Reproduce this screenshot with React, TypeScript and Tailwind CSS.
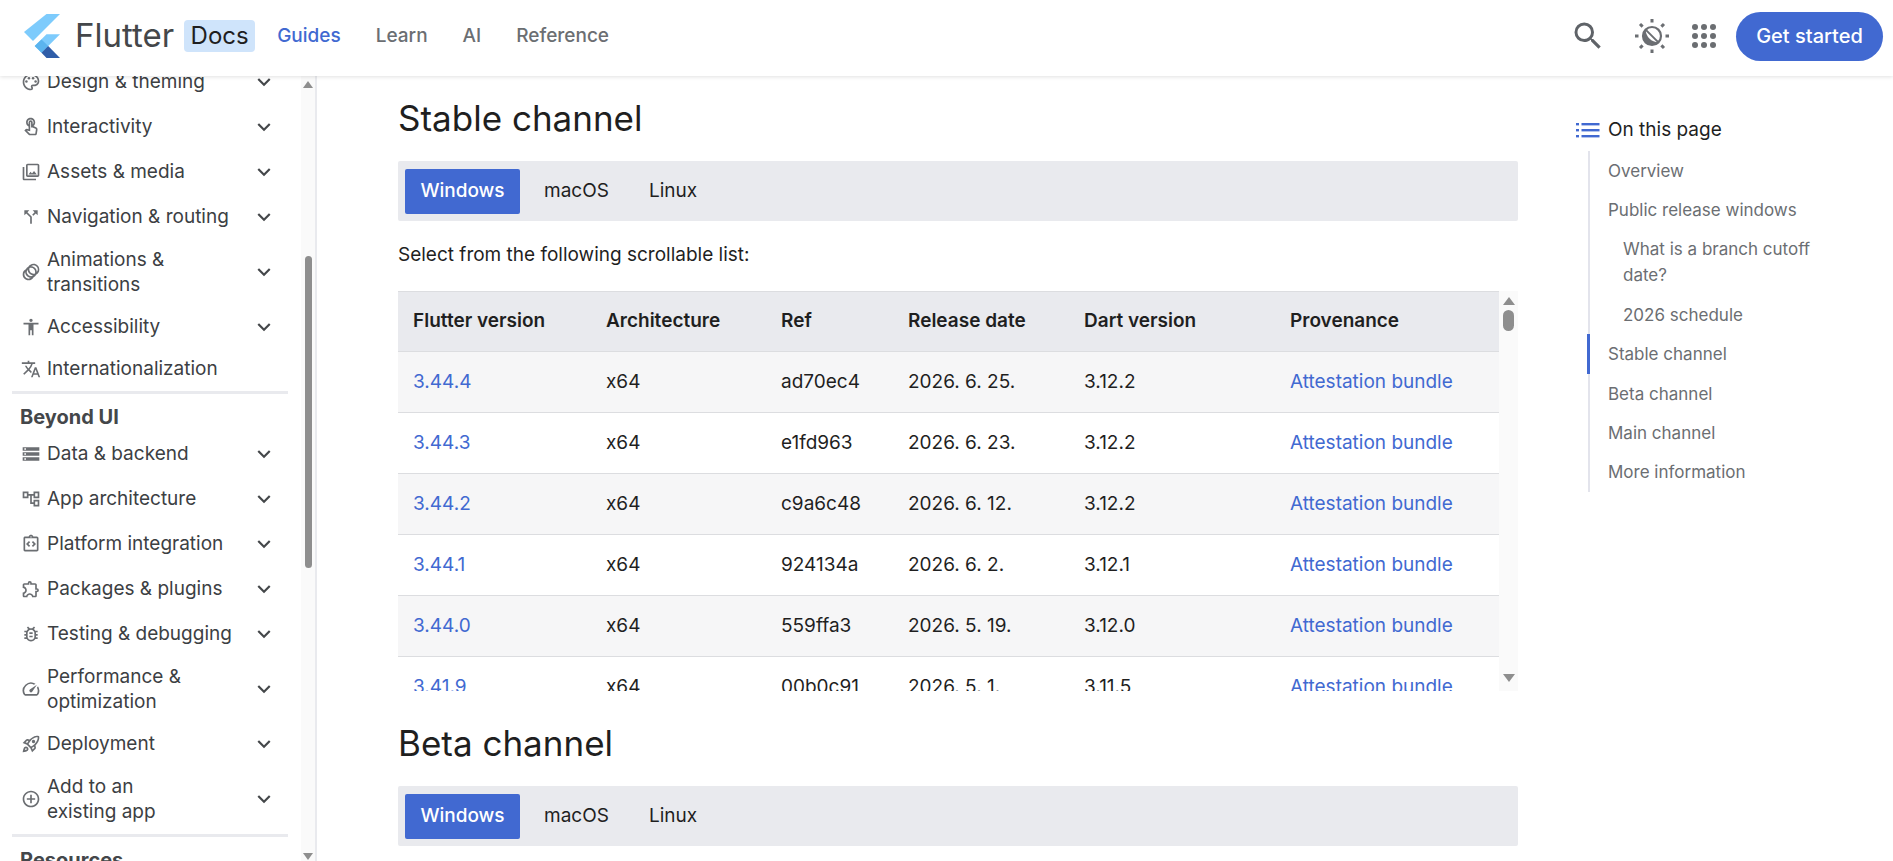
import React from 'react'
import {
  MdAccessibility,
  MdAddCircleOutline,
  MdExpandMore,
  MdOutlineAccountTree,
  MdOutlineAnimation,
  MdOutlineBugReport,
  MdOutlineCallSplit,
  MdOutlineExtension,
  MdOutlineIntegrationInstructions,
  MdOutlinePalette,
  MdOutlinePhotoLibrary,
  MdOutlineRocketLaunch,
  MdOutlineSpeed,
  MdOutlineStorage,
  MdOutlineTouchApp,
  MdOutlineTranslate,
  MdSearch,
} from 'react-icons/md'

type NavItem = {
  icon: React.ComponentType<{ className?: string }>
  label: React.ReactNode
  tall?: boolean
  noChevron?: boolean
}

const uiItems: NavItem[] = [
  { icon: MdOutlinePalette, label: 'Design & theming' },
  { icon: MdOutlineTouchApp, label: 'Interactivity' },
  { icon: MdOutlinePhotoLibrary, label: 'Assets & media' },
  { icon: MdOutlineCallSplit, label: 'Navigation & routing' },
  { icon: MdOutlineAnimation, label: <>Animations &<br />transitions</>, tall: true },
  { icon: MdAccessibility, label: 'Accessibility' },
  { icon: MdOutlineTranslate, label: 'Internationalization', noChevron: true },
]

const beyondItems: NavItem[] = [
  { icon: MdOutlineStorage, label: 'Data & backend' },
  { icon: MdOutlineAccountTree, label: 'App architecture' },
  { icon: MdOutlineIntegrationInstructions, label: 'Platform integration' },
  { icon: MdOutlineExtension, label: 'Packages & plugins' },
  { icon: MdOutlineBugReport, label: 'Testing & debugging' },
  { icon: MdOutlineSpeed, label: <>Performance &<br />optimization</>, tall: true },
  { icon: MdOutlineRocketLaunch, label: 'Deployment' },
  { icon: MdAddCircleOutline, label: <>Add to an<br />existing app</>, tall: true },
]

const releases = [
  ['3.44.4', 'x64', 'ad70ec4', '2026. 6. 25.', '3.12.2'],
  ['3.44.3', 'x64', 'e1fd963', '2026. 6. 23.', '3.12.2'],
  ['3.44.2', 'x64', 'c9a6c48', '2026. 6. 12.', '3.12.2'],
  ['3.44.1', 'x64', '924134a', '2026. 6. 2.', '3.12.1'],
  ['3.44.0', 'x64', '559ffa3', '2026. 5. 19.', '3.12.0'],
  ['3.41.9', 'x64', '00b0c91', '2026. 5. 1.', '3.11.5'],
]

const FlutterLogo = () => (
  <svg viewBox="0 0 36 44" className="h-[44px] w-[36px]">
    <path d="M22.5 0H36L9 27 0 18z" fill="#7dcbfc" />
    <path d="M36 20.3H22.5L10.7 32.1l6.8 6.7z" fill="#7dcbfc" />
    <path d="M10.7 32.1l6.8-6.7 6.7 6.7-6.7 6.7z" fill="#5bb4ee" />
    <path d="M17.5 38.8l6.7-6.7L36 44H22.5z" fill="#2f5da8" />
  </svg>
)

const ThemeIcon = () => (
  <svg viewBox="0 0 36 36" className="h-[36px] w-[36px]" fill="none" stroke="#6b6e72">
    <circle cx="18" cy="18" r="9" strokeWidth="2.2" />
    <path d="M11.6 11.6l12.8 12.8" strokeWidth="2" />
    <path d="M11.6 11.6A9 9 0 0 0 24.4 24.4 13 13 0 0 1 11.6 11.6z" fill="#6b6e72" stroke="none" />
    <path d="M18 1v3.5M18 31.5V35M1 18h3.5M31.5 18H35M6 6l2.6 2.6M27.4 27.4L30 30M30 6l-2.6 2.6M8.6 27.4L6 30" strokeWidth="3" />
  </svg>
)

const AppsIcon = () => (
  <svg viewBox="0 0 24 24" className="h-[24px] w-[24px]" fill="#6b6e72">
    {[3, 12, 21].map(cy => [3, 12, 21].map(cx => <circle key={`${cx}-${cy}`} cx={cx} cy={cy} r="3" />))}
  </svg>
)

const TocIcon = () => (
  <svg viewBox="0 0 24 16" className="h-[16px] w-[24px]" fill="#4169d1">
    <rect x="0" y="1" width="3" height="2.4" />
    <rect x="0" y="7" width="3" height="2.4" />
    <rect x="0" y="13" width="3" height="2.4" />
    <rect x="5.5" y="1" width="18" height="2.4" />
    <rect x="5.5" y="7" width="18" height="2.4" />
    <rect x="5.5" y="13" width="18" height="2.4" />
  </svg>
)

const SideRow = ({ item }: { item: NavItem }) => (
  <div className={`flex items-center pr-[23px] pl-[21px] ${item.tall ? 'h-[65px]' : item.noChevron ? 'h-[39px]' : 'h-[45px]'}`}>
    <item.icon className="mr-[6px] h-[20px] w-[20px] shrink-0 text-[#6b6e72]" />
    <span className="flex-1 text-[19px] leading-[25px] text-[#3c4043]">{item.label}</span>
    {!item.noChevron && <MdExpandMore className="h-[26px] w-[26px] text-[#44474a]" />}
  </div>
)

const Tabs = () => (
  <div className="flex h-[60px] items-center rounded-[2px] bg-[#e9eaee] pl-[7px]">
    <div className="flex h-[45px] w-[115px] items-center justify-center rounded-[2px] bg-[#4169d1] text-[19px] font-medium text-white">Windows</div>
    <div className="ml-[24px] text-[19px] text-[#1f1f1f]">macOS</div>
    <div className="ml-[40px] text-[19px] text-[#1f1f1f]">Linux</div>
  </div>
)

const tocItems: [string, string, boolean?][] = [
  ['Overview', 'h-[39px] pl-[18px]'],
  ['Public release windows', 'h-[39px] pl-[18px]'],
  ['What is a branch cutoff date?', 'h-[66px] pl-[33px]'],
  ['2026 schedule', 'h-[39px] pl-[33px]'],
  ['Stable channel', 'h-[40px] pl-[18px]', true],
  ['Beta channel', 'h-[39px] pl-[18px]'],
  ['Main channel', 'h-[39px] pl-[18px]'],
  ['More information', 'h-[40px] pl-[18px]'],
]

const tableCols = 'grid-cols-[193px_175px_127px_176px_206px_224px]'

export default function App() {
  return (
    <div className="flex h-[861px] w-[1893px] flex-col overflow-hidden bg-white font-['Inter',sans-serif] text-[#1f1f1f]">
      <header className="relative z-10 flex h-[76px] shrink-0 items-center pr-[10px] pb-[4px] pl-[24px] shadow-[0_1px_4px_rgba(0,0,0,0.12)]">
        <FlutterLogo />
        <span className="ml-[15px] text-[33px] text-[#44474a]">Flutter</span>
        <span className="ml-[10px] flex h-[32px] w-[71px] items-center justify-center rounded-[4px] bg-[#cfe4fb] text-[24px]">Docs</span>
        <nav className="ml-[22px] flex items-center gap-[35px] text-[19px] font-medium text-[#6b6e72]">
          <span className="text-[#4169d1]">Guides</span>
          <span>Learn</span>
          <span>AI</span>
          <span>Reference</span>
        </nav>
        <div className="ml-auto flex items-center">
          <MdSearch className="h-[36px] w-[36px] text-[#5f6368]" />
          <div className="ml-[28px]"><ThemeIcon /></div>
          <div className="ml[0px] ml-[22px]"><AppsIcon /></div>
          <div className="ml-[20px] flex h-[49px] w-[147px] items-center justify-center rounded-full bg-[#4169d1] text-[20px] font-medium text-white">Get started</div>
        </div>
      </header>

      <div className="flex min-h-0 flex-1">
        <aside className="relative w-[317px] shrink-0 overflow-hidden border-r-[2px] border-[#e9eaee]">
          <div className="-mt-[17px] w-[300px]">
            {uiItems.map((item, i) => <SideRow key={i} item={item} />)}
            <div className="mx-[12px] mt-[3px] h-[3px] bg-[#e9eaee]" />
            <div className="mt-[9px] h-[28px] pl-[20px] text-[20px] font-bold leading-[28px] text-[#44474a]">Beyond UI</div>
            {beyondItems.map((item, i) => <SideRow key={i} item={item} />)}
            <div className="mx-[12px] mt-[3px] h-[3px] bg-[#e9eaee]" />
            <div className="mt-[9px] pl-[20px] text-[20px] font-bold leading-[28px] text-[#44474a]">Resources</div>
          </div>
          <div className="absolute top-0 right-0 bottom-0 flex w-[14px] flex-col items-center bg-[#fafafa]">
            <div className="mt-[5px] h-0 w-0 border-x-[5px] border-b-[7px] border-x-transparent border-b-[#8e8e8e]" />
            <div className="mt-[168px] h-[312px] w-[7px] rounded-full bg-[#8e8e8e]" />
            <div className="mt-auto mb-[1px] h-0 w-0 border-x-[5px] border-t-[7px] border-x-transparent border-t-[#8e8e8e]" />
          </div>
        </aside>

        <main className="ml-[81px] w-[1120px] shrink-0 overflow-hidden">
          <h2 className="mt-[18px] h-[48px] text-[35px] leading-[48px] text-[#1f1f1f]">Stable channel</h2>
          <div className="mt-[19px]"><Tabs /></div>
          <p className="mt-[20px] h-[28px] text-[19px] leading-[28px]">Select from the following scrollable list:</p>
          <div className="mt-[22px] flex h-[400px] overflow-hidden">
            <div className="w-[1101px] overflow-hidden">
              <div className={`grid h-[61px] items-center border-y border-[#dcdde0] bg-[#e9eaee] pl-[15px] text-[19px] font-semibold ${tableCols}`}>
                <span>Flutter version</span>
                <span>Architecture</span>
                <span>Ref</span>
                <span>Release date</span>
                <span>Dart version</span>
                <span>Provenance</span>
              </div>
              {releases.map((row, i) => (
                <div key={row[0]} className={`grid h-[61px] items-center border-b border-[#dcdde0] pl-[15px] text-[19px] ${tableCols} ${i % 2 === 0 ? 'bg-[#f6f6f7]' : 'bg-white'}`}>
                  <span className="text-[#4169d1]">{row[0]}</span>
                  <span>{row[1]}</span>
                  <span>{row[2]}</span>
                  <span>{row[3]}</span>
                  <span>{row[4]}</span>
                  <span className="text-[#4169d1]">Attestation bundle</span>
                </div>
              ))}
            </div>
            <div className="flex w-[19px] flex-col items-center bg-[#fafafa]">
              <div className="mt-[6px] h-0 w-0 border-x-[6px] border-b-[8px] border-x-transparent border-b-[#8e8e8e]" />
              <div className="mt-[5px] h-[21px] w-[11px] rounded-full bg-[#8e8e8e]" />
              <div className="mt-auto mb-[9px] h-0 w-0 border-x-[6px] border-t-[8px] border-x-transparent border-t-[#8e8e8e]" />
            </div>
          </div>
          <h2 className="mt-[28px] h-[48px] text-[35px] leading-[48px] text-[#1f1f1f]">Beta channel</h2>
          <div className="mt-[19px]"><Tabs /></div>
        </main>

        <aside className="ml-[58px] w-[270px] shrink-0 pt-[38px]">
          <div className="flex h-[32px] items-center text-[19px]">
            <TocIcon />
            <span className="ml-[8px]">On this page</span>
          </div>
          <div className="mt-[5px] ml-[12px] w-[250px] border-l-[2px] border-[#e3e4ec]">
            {tocItems.map(([label, cls, active]) => (
              <div key={label} className={`relative flex items-center text-[17px] leading-[26px] text-[#6b6e72] ${cls}`}>
                {active && <div className="absolute top-0 -left-[3px] h-full w-[3px] bg-[#4169d1]" />}
                <span>{label}</span>
              </div>
            ))}
          </div>
        </aside>
      </div>
    </div>
  )
}
